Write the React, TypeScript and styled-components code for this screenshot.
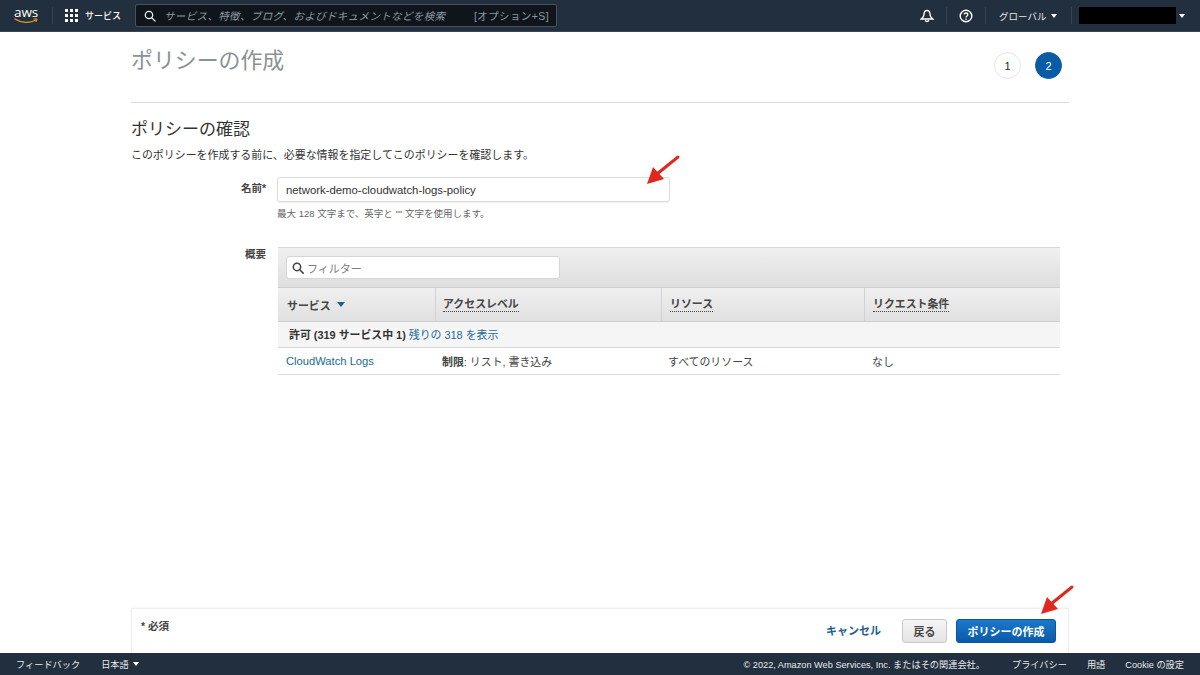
import React from 'react';
import styled, { createGlobalStyle } from 'styled-components';

const Global = createGlobalStyle`
  html, body { margin: 0; padding: 0; background: #fff; }
  body { font-family: "Liberation Sans", "Noto Sans CJK JP", sans-serif; color: #16191f; }
  * { box-sizing: border-box; }
`;

const Page = styled.div`
  position: relative; width: 1200px; height: 675px; overflow: hidden;
  display: flex; flex-direction: column;
`;
const Header = styled.header`
  height: 32px; flex: none; background: #222f3e; border-bottom: 1px solid #3a4553;
  display: flex; align-items: center; color: #fff;
`;
const LogoBox = styled.div`
  width: 52px; height: 100%; padding-left: 14px; display: flex; flex-direction: column; align-items: flex-start; justify-content: center;
`;
const LogoText = styled.span`
  font-family: "Open Sans", sans-serif; font-size: 13.5px; line-height: 11px; width: 24px; text-align: center; letter-spacing: -0.2px; color: #fff; margin-top: -1px;
`;
const VSep = styled.span`
  width: 1px; height: 17px; background: #36424f; flex: none;
`;
const Services = styled.div`
  display: flex; align-items: center; gap: 7px; font-size: 9px; margin-left: 12px; width: 70px; font-weight: 500;
`;
const Search = styled.div`
  width: 422px; height: 23px; background: #10151c; border: 1px solid #46535f; border-radius: 2px;
  display: flex; align-items: center; padding: 0 7px 0 8px; font-size: 10.5px; color: #8d98a1;
`;
const SearchHint = styled.span`
  flex: 1; margin-left: 8px; font-style: italic; letter-spacing: 0.35px; white-space: nowrap;
`;
const SearchKey = styled.span`
  letter-spacing: 0.4px;
`;
const HeaderRight = styled.div`
  margin-left: auto; display: flex; align-items: center; height: 100%; padding-right: 8px;
`;
const HeaderIcon = styled.span`
  width: 38px; display: flex; justify-content: center; align-items: center;
`;
const Region = styled.div`
  display: flex; align-items: center; gap: 5px; font-size: 9.5px; color: #e4e7ea; width: 85px; padding-left: 13px;
`;
const Caret = styled.span<{ $c?: string; $w?: number }>`
  width: 0; height: 0; display: inline-block; flex: none;
  border-left: ${p => p.$w || 3.5}px solid transparent; border-right: ${p => p.$w || 3.5}px solid transparent;
  border-top: ${p => (p.$w || 3.5) + 1}px solid ${p => p.$c || '#fff'};
`;
const Account = styled.div`
  display: flex; align-items: center; gap: 3px; margin-left: 7px; width: 113px;
`;
const Redacted = styled.span`
  width: 97px; height: 17px; background: #000; display: block;
`;

const Main = styled.main`
  flex: 1; min-height: 0; width: 938px; margin-left: 131px; display: flex; flex-direction: column;
`;
const TitleRow = styled.div`
  height: 71px; flex: none; border-bottom: 1px solid #d9d9d9; display: flex; align-items: flex-start; justify-content: space-between;
`;
const Title = styled.h1`
  margin: 15px 0 0; font-size: 21.9px; line-height: 28px; font-weight: 400; color: #8a9293;
`;
const Steps = styled.div`
  display: flex; gap: 14px; margin: 20px 7px 0 0;
`;
const Step = styled.span<{ $active?: boolean }>`
  width: 27px; height: 27px; border-radius: 50%; display: flex; align-items: center; justify-content: center; font-size: 11px;
  background: ${p => (p.$active ? '#0a5ba5' : '#fff')}; color: ${p => (p.$active ? '#fff' : '#222')};
  border: 1px solid ${p => (p.$active ? '#0a5ba5' : '#e5e5e5')};
`;
const Heading = styled.h2`
  margin: 15px 0 0; font-size: 17px; line-height: 24px; font-weight: 400; color: #333;
`;
const Desc = styled.p`
  margin: 6px 0 0; font-size: 10.95px; line-height: 14px; color: #333;
`;
const FormRow = styled.div<{ $mt: number }>`
  display: grid; grid-template-columns: 135px 1fr; column-gap: 11px; margin-top: ${p => p.$mt}px;
`;
const FieldLabel = styled.label<{ $pt: number }>`
  text-align: right; font-size: 10.5px; font-weight: 700; color: #444; padding-top: ${p => p.$pt}px; line-height: 14px;
`;
const NameInput = styled.div`
  width: 393px; height: 25px; border: 1px solid #dcdcdc; border-radius: 3px; background: #fff; padding: 0 8px;
  display: flex; align-items: center; font-size: 11.35px; color: #333; box-shadow: 0 1px 1px rgba(0,0,0,.06);
`;
const Hint = styled.p`
  margin: 5px 0 1px; font-size: 9.5px; line-height: 13px; color: #666;
`;
const Table = styled.div`
  width: 782px; margin-left: 1px; border-bottom: 1px solid #dbdbdb;
`;
const Toolbar = styled.div`
  height: 41px; background: linear-gradient(#f0f0f0, #dedede); border-top: 1px solid #d8d8d8; border-bottom: 1px solid #cfcfcf;
  padding: 8px;
`;
const Filter = styled.div`
  width: 274px; height: 23px; background: #fff; border: 1px solid #d5d5d5; border-radius: 3px; display: flex; align-items: center; padding: 0 5px; gap: 3px;
  font-size: 11px; color: #7d7d7d;
`;
const HeadRow = styled.div`
  height: 34px; display: grid; grid-template-columns: 157px 226px 203px 1fr; background: linear-gradient(#f0f0f0, #e0e0e0); border-bottom: 1px solid #cfcfcf;
`;
const HeadCell = styled.div`
  padding-left: 8px; display: flex; align-items: center; gap: 6px; font-size: 10.9px; font-weight: 700; color: #444; border-left: 1px solid #d2d2d2;
  &:first-child { border-left: 0; padding-left: 9px; }
  &:nth-child(2) { padding-left: 7px; }
`;
const Dotted = styled.span`
  border-bottom: 1px dotted #444; line-height: 14px;
`;
const GroupRow = styled.div`
  height: 26px; background: #f5f5f5; border-bottom: 1px solid #d8d8d8; padding: 0 0 1px 11px; display: flex; align-items: center; gap: 3px; font-size: 10.9px; font-weight: 700; color: #333;
`;
const Link = styled.a`
  color: #1c6b96; font-weight: 400; text-decoration: none;
`;
const ServiceLink = styled(Link)`
  font-size: 11.2px;
`;
const DataRow = styled.div`
  height: 26px; padding-bottom: 1px; display: grid; grid-template-columns: 157px 226px 203px 1fr; align-items: center; font-size: 10.9px; color: #444;
`;
const DataCell = styled.div`
  padding-left: 8px;
  &:nth-child(2), &:nth-child(3) { padding-left: 7px; }
`;
const Strong = styled.b`
  font-weight: 700;
`;
const ActionBar = styled.div`
  margin-top: auto; height: 45px; flex: none; border: 1px solid #efefef; border-bottom: 0; display: flex; align-items: flex-start; padding: 10px 12px 0 9px;
  box-shadow: 0 -1px 2px rgba(0,0,0,.04);
`;
const Required = styled.span`
  font-size: 10.5px; font-weight: 700; color: #444; line-height: 14px;
`;
const Cancel = styled.a`
  margin-left: auto; font-size: 11px; font-weight: 700; color: #1c6093; line-height: 24px;
`;
const Button = styled.button<{ $primary?: boolean }>`
  height: 24px; border-radius: 3px; font: 700 11px "Liberation Sans", "Noto Sans CJK JP", sans-serif; padding: 0;
  width: ${p => (p.$primary ? 100 : 45)}px; margin-left: ${p => (p.$primary ? 9 : 21)}px;
  color: ${p => (p.$primary ? '#fff' : '#444')};
  background: ${p => (p.$primary ? 'linear-gradient(#1b78c9, #0a5ba8)' : 'linear-gradient(#f5f5f5, #e4e4e4)')};
  border: 1px solid ${p => (p.$primary ? '#0a56a0' : '#c9c9c9')};
`;
const Footer = styled.footer`
  height: 22px; flex: none; background: #222f3e; display: flex; align-items: center; padding: 0 16px; color: #e8eaec; font-size: 9.2px;
`;
const Language = styled.span`
  display: flex; align-items: center; gap: 4px; margin-left: 21px;
`;
const FooterRight = styled.div`
  margin-left: auto; display: flex; gap: 20px;
`;
const Copyright = styled.span`
  margin-right: 7px;
`;
const Arrow = styled.svg<{ $left: number; $top: number }>`
  position: absolute; left: ${p => p.$left}px; top: ${p => p.$top}px; width: 36px; height: 36px;
`;

const RedArrow = ({ left, top }: { left: number; top: number }) => (
  <Arrow $left={left} $top={top} viewBox="0 0 36 36">
    <path d="M33 3 L12 20" stroke="#e0281e" strokeWidth="3" strokeLinecap="round" fill="none" />
    <path d="M2 30 L8 13 L19 25 Z" fill="#e0281e" />
  </Arrow>
);

const Grid = () => (
  <svg width="13" height="13" viewBox="0 0 13 13" fill="#fff">
    {[0, 5, 10].flatMap(y => [0, 5, 10].map(x => <rect key={`${x}-${y}`} x={x} y={y} width="3" height="3" />))}
  </svg>
);

const Glass = ({ size, color, w }: { size: number; color: string; w: number }) => (
  <svg width={size} height={size} viewBox="0 0 14 14" fill="none" stroke={color} strokeWidth={w} strokeLinecap="round">
    <circle cx="5.8" cy="5.8" r="4.3" />
    <path d="M9 9 L13 13" />
  </svg>
);

export default function App() {
  return (
    <Page>
      <Global />
      <Header>
        <LogoBox>
          <LogoText>aws</LogoText>
          <svg width="24" height="6" viewBox="0 0 24 6" fill="none">
            <path d="M1 1 C7 5 16 5.5 22 2" stroke="#f29a1f" strokeWidth="1.3" strokeLinecap="round" />
            <path d="M19.5 1 L23 1 L22 4" stroke="#f29a1f" strokeWidth="1" />
          </svg>
        </LogoBox>
        <VSep />
        <Services><Grid /><span>サービス</span></Services>
        <Search>
          <Glass size={12} color="#eef0f2" w={1.5} />
          <SearchHint>サービス、特徴、ブログ、およびドキュメントなどを検索</SearchHint>
          <SearchKey>[オプション+S]</SearchKey>
        </Search>
        <HeaderRight>
          <HeaderIcon>
            <svg width="14" height="14" viewBox="0 0 14 14" fill="none" stroke="#fff" strokeWidth="1.4">
              <path d="M7 1.5 C4.6 1.5 4 3.5 4 5.5 C4 7.5 3 8.6 1.2 10 H12.8 C11 8.6 10 7.5 10 5.5 C10 3.5 9.4 1.5 7 1.5 Z" />
              <path d="M5.5 11 C5.5 13.2 8.5 13.2 8.5 11" />
            </svg>
          </HeaderIcon>
          <VSep />
          <HeaderIcon>
            <svg width="14" height="14" viewBox="0 0 14 14" fill="none" stroke="#fff">
              <circle cx="7" cy="7" r="5.8" strokeWidth="1.4" />
              <path d="M5.2 5.6 C5.2 3.4 8.9 3.5 8.9 5.6 C8.9 7 7 6.9 7 8.5" strokeWidth="1.3" />
              <circle cx="7" cy="10.2" r="0.8" fill="#fff" stroke="none" />
            </svg>
          </HeaderIcon>
          <VSep />
          <Region><span>グローバル</span><Caret /></Region>
          <VSep />
          <Account><Redacted /><Caret /></Account>
        </HeaderRight>
      </Header>
      <Main>
        <TitleRow>
          <Title>ポリシーの作成</Title>
          <Steps>
            <Step>1</Step>
            <Step $active>2</Step>
          </Steps>
        </TitleRow>
        <Heading>ポリシーの確認</Heading>
        <Desc>このポリシーを作成する前に、必要な情報を指定してこのポリシーを確認します。</Desc>
        <FormRow $mt={15}>
          <FieldLabel $pt={4}>名前*</FieldLabel>
          <div>
            <NameInput>network-demo-cloudwatch-logs-policy</NameInput>
            <Hint>最大 128 文字まで、英字と '"' 文字を使用します。</Hint>
          </div>
        </FormRow>
        <FormRow $mt={26}>
          <FieldLabel $pt={0}>概要</FieldLabel>
          <Table>
            <Toolbar>
              <Filter><Glass size={12} color="#444" w={1.8} /><span>フィルター</span></Filter>
            </Toolbar>
            <HeadRow>
              <HeadCell>サービス <Caret $c="#1c6093" $w={4} /></HeadCell>
              <HeadCell><Dotted>アクセスレベル</Dotted></HeadCell>
              <HeadCell><Dotted>リソース</Dotted></HeadCell>
              <HeadCell><Dotted>リクエスト条件</Dotted></HeadCell>
            </HeadRow>
            <GroupRow>許可 (319 サービス中 1) <Link>残りの 318 を表示</Link></GroupRow>
            <DataRow>
              <DataCell><ServiceLink>CloudWatch Logs</ServiceLink></DataCell>
              <DataCell><Strong>制限</Strong>: リスト, 書き込み</DataCell>
              <DataCell>すべてのリソース</DataCell>
              <DataCell>なし</DataCell>
            </DataRow>
          </Table>
        </FormRow>
        <ActionBar>
          <Required>* 必須</Required>
          <Cancel>キャンセル</Cancel>
          <Button>戻る</Button>
          <Button $primary>ポリシーの作成</Button>
        </ActionBar>
      </Main>
      <Footer>
        <span>フィードバック</span>
        <Language>日本語 <Caret /></Language>
        <FooterRight>
          <Copyright>© 2022, Amazon Web Services, Inc. またはその関連会社。</Copyright>
          <span>プライバシー</span>
          <span>用語</span>
          <span>Cookie の設定</span>
        </FooterRight>
      </Footer>
      <RedArrow left={645} top={154} />
      <RedArrow left={1039} top={584} />
    </Page>
  );
}
